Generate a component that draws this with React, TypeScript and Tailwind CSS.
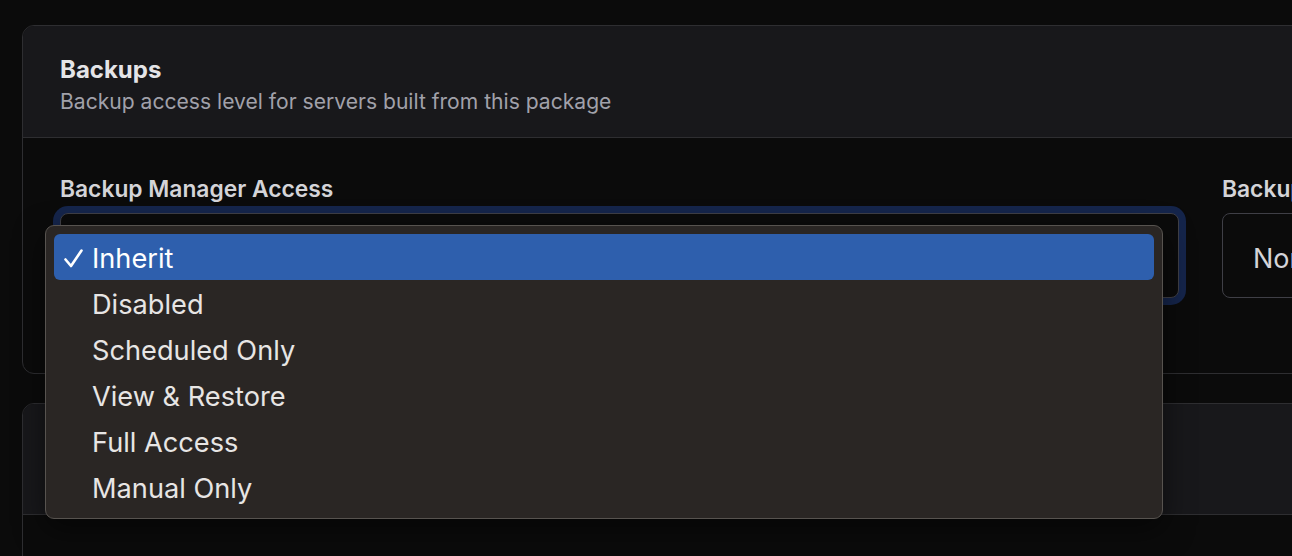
import React from "react";

const items = ["Inherit", "Disabled", "Scheduled Only", "View & Restore", "Full Access", "Manual Only"];

export default function App() {
  return (
    <div
      className="relative h-[556px] w-full overflow-hidden bg-[#0b0b0b] text-[#e4e4e7]"
      style={{ fontFamily: "Inter, 'Noto Sans', sans-serif" }}
    >
      <div className="flex w-[2500px] flex-col gap-[29px] pl-[22px] pt-[25px]">
        {/* Card 1 */}
        <div className="overflow-hidden rounded-[12px] border border-[#2e2e31]">
          <div className="flex h-[112px] flex-col border-b border-[#2e2e31] bg-[#18181b] px-[37px] pt-[28px]">
            <div className="text-[24px] font-bold leading-[32px] text-[#e4e4e7]">Backups</div>
            <div className="text-[21.1px] leading-[32px] text-[#a1a1aa]">Backup access level for servers built from this package</div>
          </div>
          <div className="grid grid-cols-[1119px_1119px] gap-[43px] px-[37px] pb-[75px] pt-[36px]">
            <div className="flex flex-col gap-[9px]">
              <div className="text-[22.8px] font-semibold leading-[30px] text-[#d4d4d8]">Backup Manager Access</div>
              <div className="h-[85px] rounded-[8px] border border-[#3f3f46] bg-[#0b0b0b] shadow-[0_0_0_7px_#15254b]"></div>
            </div>
            <div className="flex flex-col gap-[9px]">
              <div className="text-[22.8px] font-semibold leading-[30px] text-[#d4d4d8]">Backup Scheduler Access</div>
              <div className="flex h-[85px] items-center rounded-[8px] border border-[#3f3f46] bg-[#0b0b0b] pl-[30px] pt-[5px] text-[27px] leading-none text-[#d4d4d8]">
                None
              </div>
            </div>
          </div>
        </div>
        {/* Card 2 */}
        <div className="h-[300px] overflow-hidden rounded-[12px] border border-[#2e2e31]">
          <div className="h-[111px] border-b border-[#2e2e31] bg-[#18181b]"></div>
        </div>
      </div>

      {/* Dropdown menu */}
      <div className="absolute left-[45px] top-[225px] flex w-[1118px] flex-col rounded-[9px] border border-[#57534f] bg-[#2a2624] p-[8px] shadow-[0_10px_30px_rgba(0,0,0,0.5)]">
        {items.map((it, i) => (
          <div
            key={it}
            className={
              i === 0
                ? "flex h-[46px] items-center rounded-[6px] bg-[#2e5fad] pl-[10px] text-[27.2px] leading-none text-white"
                : "flex h-[46px] items-center pl-[10px] text-[27.2px] leading-none text-[#e7e5e4]"
            }
          >
            <span className="flex w-[28px] items-center pt-[2px]">
              {i === 0 ? (
                <svg width="19" height="19" viewBox="0 0 19 19" fill="none">
                  <path d="M1.5 10.5 L7 17 L17.5 1.5" stroke="white" strokeWidth="2.6" strokeLinecap="round" strokeLinejoin="round" />
                </svg>
              ) : null}
            </span>
            <span className="pt-[3px]">{it}</span>
          </div>
        ))}
      </div>
    </div>
  );
}
